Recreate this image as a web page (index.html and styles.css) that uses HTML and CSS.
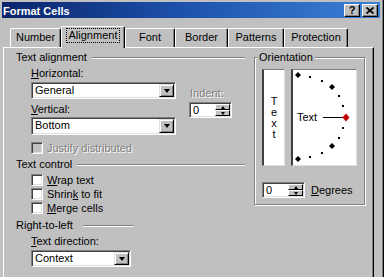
FILE: index.html
```html
<!DOCTYPE html>
<html>
<head>
<meta charset="utf-8">
<title>Format Cells</title>
<link rel="stylesheet" href="styles.css">
</head>
<body>
<div class="dialog">
  <div class="titlebar">
    <span class="title">Format Cells</span>
    <div class="tbtns">
      <span class="tbtn q">?</span>
      <span class="tbtn"><svg width="8" height="7" viewBox="0 0 8 7"><path d="M0.5 0.5 L7.5 6.5 M7.5 0.5 L0.5 6.5" stroke="#000" stroke-width="1.7" fill="none"/></svg></span>
    </div>
  </div>

  <div class="tabs">
    <div class="tab w-number">Number</div>
    <div class="tab active w-align"><span class="focus">Alignment</span></div>
    <div class="tab w-font">Font</div>
    <div class="tab w-border">Border</div>
    <div class="tab w-patterns">Patterns</div>
    <div class="tab w-protect">Protection</div>
  </div>

  <div class="panel">
    <div class="leftcol">
      <div class="group-h"><span>Text alignment</span><i class="rule"></i></div>

      <div class="align-sec">
        <div class="combos">
          <div class="lbl"><u>H</u>orizontal:</div>
          <div class="combo c1"><span class="val">General</span><b class="drop"><i class="tri-down"></i></b></div>
          <div class="lbl l2"><u>V</u>ertical:</div>
          <div class="combo c2"><span class="val">Bottom</span><b class="drop"><i class="tri-down"></i></b></div>
        </div>
        <div class="indent">
          <div class="lbl dis">Indent:</div>
          <div class="spin"><span class="val">0</span><span class="spinbtns"><b class="sb"><i class="tri-up"></i></b><b class="sb"><i class="tri-down sm"></i></b></span></div>
        </div>
      </div>

      <div class="check disabled j"><i class="box"></i><span class="dis">Justify distributed</span></div>

      <div class="group-h tc"><span>Text control</span><i class="rule"></i></div>
      <div class="checks">
        <div class="check"><i class="box"></i><span><u>W</u>rap text</span></div>
        <div class="check"><i class="box"></i><span>Shrin<u>k</u> to fit</span></div>
        <div class="check"><i class="box"></i><span><u>M</u>erge cells</span></div>
      </div>

      <div class="group-h rtl"><span>Right-to-left</span><i class="rule short"></i></div>
      <div class="lbl ind td"><u>T</u>ext direction:</div>
      <div class="combo c3"><span class="val">Context</span><b class="drop"><i class="tri-down"></i></b></div>
    </div>

    <fieldset class="orient">
      <legend>Orientation</legend>
      <div class="orient-row">
        <div class="vtext"><span>T</span><span>e</span><span>x</span><span>t</span></div>
        <div class="arc">
          <svg width="63" height="95" viewBox="0 0 63 95">
            <g fill="#000">
              <polygon points="5,2 8,5 5,8 2,5"/>
              <polygon points="39,14 42,17 39,20 36,17"/>
              <polygon points="39,73 42,76 39,79 36,76"/>
              <polygon points="5,86 8,89 5,92 2,89"/>
              <rect x="16" y="6" width="2" height="2"/>
              <rect x="28" y="10" width="2" height="2"/>
              <rect x="45" y="25" width="2" height="2"/>
              <rect x="49" y="35" width="2" height="2"/>
              <rect x="49" y="57" width="2" height="2"/>
              <rect x="45" y="67" width="2" height="2"/>
              <rect x="28" y="82" width="2" height="2"/>
              <rect x="16" y="86" width="2" height="2"/>
            </g>
            <text x="4" y="51" class="arc-text">Text</text>
            <line x1="30" y1="47.5" x2="50" y2="47.5" stroke="#000" stroke-width="1"/>
            <polygon points="53,43.5 56.5,47.5 53,51.5 49.5,47.5" fill="#c00000"/>
          </svg>
        </div>
      </div>
      <div class="deg-row">
        <div class="spin"><span class="val">0</span><span class="spinbtns"><b class="sb"><i class="tri-up"></i></b><b class="sb"><i class="tri-down sm"></i></b></span></div>
        <span class="deg-lbl"><u>D</u>egrees</span>
      </div>
    </fieldset>
  </div>
</div>
</body>
</html>
```

FILE: styles.css
```css
* { box-sizing: border-box; }

html, body {
  margin: 0;
  padding: 0;
  background: #c0c0c0;
}

body {
  font-family: "Liberation Sans", Arial, sans-serif;
  font-size: 11px;
  color: #000;
  overflow: hidden;
}

u { text-decoration: underline; text-underline-offset: 1px; }

.dialog {
  width: 384px;
  height: 277px;
  background: #c0c0c0;
  border-right: 1px solid #000;
  box-shadow: inset -1px 0 0 #808080;
  padding-top: 2px;
}

/* ---- title bar ---- */
.titlebar {
  margin: 0 3px 0 2px;
  height: 16px;
  background: linear-gradient(to right, #0a246a 0%, #1c4fa8 45%, #3a80d8 100%);
  display: flex;
  align-items: center;
  justify-content: space-between;
  padding: 0 2px 0 1px;
}

.title {
  color: #fff;
  font-weight: bold;
  font-size: 11px;
  line-height: 13px;
  padding-top: 3px;
  padding-left: 0;
}

.tbtns {
  display: flex;
  gap: 2px;
  align-items: center;
}

.tbtn {
  width: 16px;
  height: 13px;
  background: #c0c0c0;
  border: 1px solid;
  border-color: #fff #000 #000 #fff;
  box-shadow: inset -1px -1px 0 #808080;
  display: flex;
  align-items: center;
  justify-content: center;
  font-weight: bold;
  font-size: 11px;
  line-height: 11px;
}

/* ---- tabs ---- */
.tabs {
  display: flex;
  align-items: flex-end;
  height: 21px;
  margin-top: 8px;
  padding-left: 10px;
}

.tab {
  height: 19px;
  background: #c0c0c0;
  border-top: 1px solid #fff;
  border-left: 1px solid #fff;
  border-right: 1px solid #000;
  box-shadow: inset -1px 0 0 #808080;
  border-radius: 2px 2px 0 0;
  display: flex;
  align-items: center;
  justify-content: center;
  line-height: 13px;
  padding-bottom: 1px;
}

.w-number { width: 51px; }
.w-align { width: 64px; }
.w-font { width: 50px; }
.w-border { width: 53px; }
.w-patterns { width: 56px; }
.w-protect { width: 64px; }

.tab.active {
  height: 22px;
  margin-bottom: -1px;
  position: relative;
  z-index: 1;
  padding-bottom: 4px;
}

.focus {
  outline: 1px dotted #000;
  outline-offset: 0;
  padding: 0 2px;
  line-height: 13px;
}

/* ---- panel ---- */
.panel {
  margin-left: 3px;
  width: 371px;
  height: 240px;
  border-top: 1px solid #fff;
  border-left: 1px solid #fff;
  border-right: 1px solid #000;
  box-shadow: inset -1px 0 0 #808080;
  padding: 3px 0 0 12px;
  display: grid;
  grid-template-columns: 231px 111px;
  column-gap: 7px;
  align-items: start;
}

.leftcol {
  display: flex;
  flex-direction: column;
}

.group-h {
  height: 13px;
  display: flex;
  align-items: center;
  line-height: 13px;
}

.rule {
  flex: 1;
  height: 2px;
  margin: 1px 2px 0 5px;
  border-top: 1px solid #808080;
  border-bottom: 1px solid #fff;
}

.rule.short {
  flex: none;
  width: 51px;
  margin-left: 10px;
}

.group-h.tc { margin-top: 3px; }
.group-h.rtl { margin-top: 4px; }

.lbl {
  height: 13px;
  line-height: 13px;
}

.dis {
  color: #808080;
  text-shadow: 1px 1px 0 #fff;
}

.align-sec {
  display: flex;
  margin-top: 3px;
  padding-left: 15px;
}

.combos {
  width: 145px;
  display: flex;
  flex-direction: column;
}

.combo {
  height: 17px;
  background: #fff;
  border: 1px solid;
  border-color: #808080 #fff #fff #808080;
  box-shadow: inset 1px 1px 0 #404040, inset -1px -1px 0 #dfdfdf;
  padding: 1px;
  display: flex;
  align-items: stretch;
}

.combo .val {
  flex: 1;
  padding-left: 2px;
  line-height: 13px;
}

.c1 { margin-top: 2px; }
.l2 { margin-top: 4px; }
.c2 { margin-top: 1px; height: 18px; }

.c3 {
  width: 100px;
  margin-top: 2px;
  margin-left: 15px;
}

.drop {
  width: 15px;
  background: #c0c0c0;
  border: 1px solid;
  border-color: #dfdfdf #000 #000 #dfdfdf;
  box-shadow: inset 1px 1px 0 #fff, inset -1px -1px 0 #808080;
  display: flex;
  align-items: center;
  justify-content: center;
}

.tri-down {
  width: 0;
  height: 0;
  border-left: 3.5px solid transparent;
  border-right: 3.5px solid transparent;
  border-top: 4px solid #000;
}

.tri-up {
  width: 0;
  height: 0;
  border-left: 2.5px solid transparent;
  border-right: 2.5px solid transparent;
  border-bottom: 3px solid #000;
}

.tri-down.sm {
  border-left-width: 2.5px;
  border-right-width: 2.5px;
  border-top-width: 3px;
}

.indent {
  margin-left: 13px;
  padding-top: 20px;
  display: flex;
  flex-direction: column;
}

.indent .lbl { padding-left: 1px; }

.spin {
  width: 43px;
  height: 16px;
  background: #fff;
  border: 1px solid;
  border-color: #808080 #fff #fff #808080;
  box-shadow: inset 1px 1px 0 #404040, inset -1px -1px 0 #dfdfdf;
  padding: 1px;
  display: flex;
  align-items: stretch;
}

.indent .spin { margin-top: 2px; }

.spin .val {
  flex: 1;
  padding-left: 2px;
  line-height: 12px;
}

.spinbtns {
  width: 15px;
  display: flex;
  flex-direction: column;
}

.sb {
  flex: 1;
  background: #c0c0c0;
  border: 1px solid;
  border-color: #fff #000 #000 #fff;
  display: flex;
  align-items: center;
  justify-content: center;
}

/* ---- checkboxes ---- */
.check {
  height: 14px;
  display: flex;
  align-items: center;
  padding-left: 15px;
  line-height: 13px;
}

.check.j { margin-top: 6px; }

.checks {
  margin-top: 2px;
  display: flex;
  flex-direction: column;
}

.box {
  width: 12px;
  height: 12px;
  margin-right: 4px;
  background: #fff;
  border: 1px solid;
  border-color: #808080 #fff #fff #808080;
  box-shadow: inset 1px 1px 0 #404040, inset -1px -1px 0 #dfdfdf;
}

.check.disabled .box { background: #c0c0c0; }

.lbl.ind {
  padding-left: 15px;
}

.lbl.td { margin-top: 3px; }

/* ---- orientation ---- */
.orient {
  margin: 0;
  min-width: 0;
  padding: 5px 7px 6px 7px;
  border: 1px solid #808080;
  box-shadow: inset 1px 1px 0 #fff, 1px 1px 0 #fff;
}

.orient legend {
  padding: 0 2px;
  margin-left: -5px;
  line-height: 13px;
  height: 13px;
  background: #c0c0c0;
}

.orient-row {
  display: flex;
  gap: 6px;
}

.vtext {
  width: 23px;
  height: 97px;
  background: #fff;
  border-left: 2px solid #404040;
  border-top: 1px solid #808080;
  border-right: 1px solid #dfdfdf;
  border-bottom: 1px solid #dfdfdf;
  display: flex;
  flex-direction: column;
  align-items: center;
  justify-content: center;
}

.vtext span {
  line-height: 11px;
  height: 11px;
}

.arc {
  width: 66px;
  height: 97px;
  background: #fff;
  border-left: 2px solid #404040;
  border-top: 1px solid #808080;
  border-right: 1px solid #dfdfdf;
  border-bottom: 1px solid #dfdfdf;
}

.arc svg { display: block; }

.arc-text {
  font-family: "Liberation Sans", Arial, sans-serif;
  font-size: 11px;
  fill: #000;
}

.deg-row {
  margin-top: 16px;
  display: flex;
  align-items: center;
}

.deg-lbl {
  margin-left: 6px;
  line-height: 13px;
}
```
